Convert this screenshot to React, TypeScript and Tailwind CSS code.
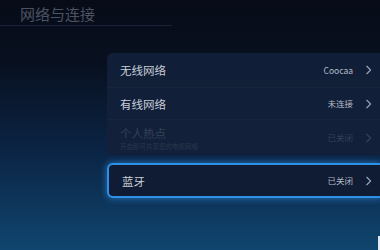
const ChevronRight = ({ className }: { className?: string }) => (
  <svg viewBox="0 0 8 12" className={className} fill="none" stroke="currentColor" strokeWidth="1.4">
    <path d="M2 1.5 L6.5 6 L2 10.5" strokeLinecap="round" strokeLinejoin="round" />
  </svg>
)

interface RowProps {
  label: string
  value: string
  hint?: string
  dim?: boolean
  divider?: boolean
  className?: string
}

const Row = ({ label, value, hint, dim, divider, className }: RowProps) => (
  <div
    className={`flex items-center pl-[13px] pr-[8px] ${divider ? "border-b border-[#18253b]" : ""} ${className ?? ""}`}
  >
    <div className="flex flex-col">
      <span className={`text-[11.5px] leading-[14px] ${dim ? "text-[#364257]" : "text-[#c9ced8]"}`}>{label}</span>
      {hint ? <span className="mt-[2px] text-[6.5px] leading-[8px] text-[#2c384c]">{hint}</span> : null}
    </div>
    <span className={`ml-auto text-[8.5px] ${dim ? "text-[#364257]" : "text-[#b3bac6]"}`}>{value}</span>
    <ChevronRight className={`ml-[12px] h-[10px] w-[7px] ${dim ? "text-[#364257]" : "text-[#9aa3b2]"}`} />
  </div>
)

export default function App() {
  return (
    <div
      className="relative h-[250px] w-[380px] overflow-hidden bg-[linear-gradient(180deg,#070b18_0%,#08101f_25%,#0b2444_60%,#10456f_100%)]"
      style={{ fontFamily: '"Noto Sans CJK SC", "Noto Sans", sans-serif' }}
    >
      <header className="pt-[4px]">
        <h1 className="pl-[20px] text-[15px] leading-[20px] text-[#4b5262]">网络与连接</h1>
        <div className="mt-[1px] h-px w-[172px] bg-[#182338]" />
      </header>
      <main className="ml-[107px] mt-[27px] flex flex-col">
        <section className="flex flex-col rounded-tl-[6px] rounded-bl-[2px] bg-[#13203a]/90">
          <Row label="无线网络" value="Coocaa" divider className="h-[35px]" />
          <Row label="有线网络" value="未连接" divider className="h-[32px]" />
          <Row label="个人热点" value="已关闭" hint="开启即可共享您的电视网络" dim className="h-[35px]" />
        </section>
        <div className="mt-[8px] rounded-l-[6px] border-2 border-r-0 border-[#2e8fe6] bg-[#0f1c33] shadow-[0_0_6px_1px_rgba(46,143,230,0.6)]">
          <Row label="蓝牙" value="已关闭" className="h-[31px] pl-[11px] pr-[8px]" />
        </div>
      </main>
      <div className="absolute bottom-0 right-0 h-[14px] w-[2px] bg-[#dfe8f3]" />
    </div>
  )
}
